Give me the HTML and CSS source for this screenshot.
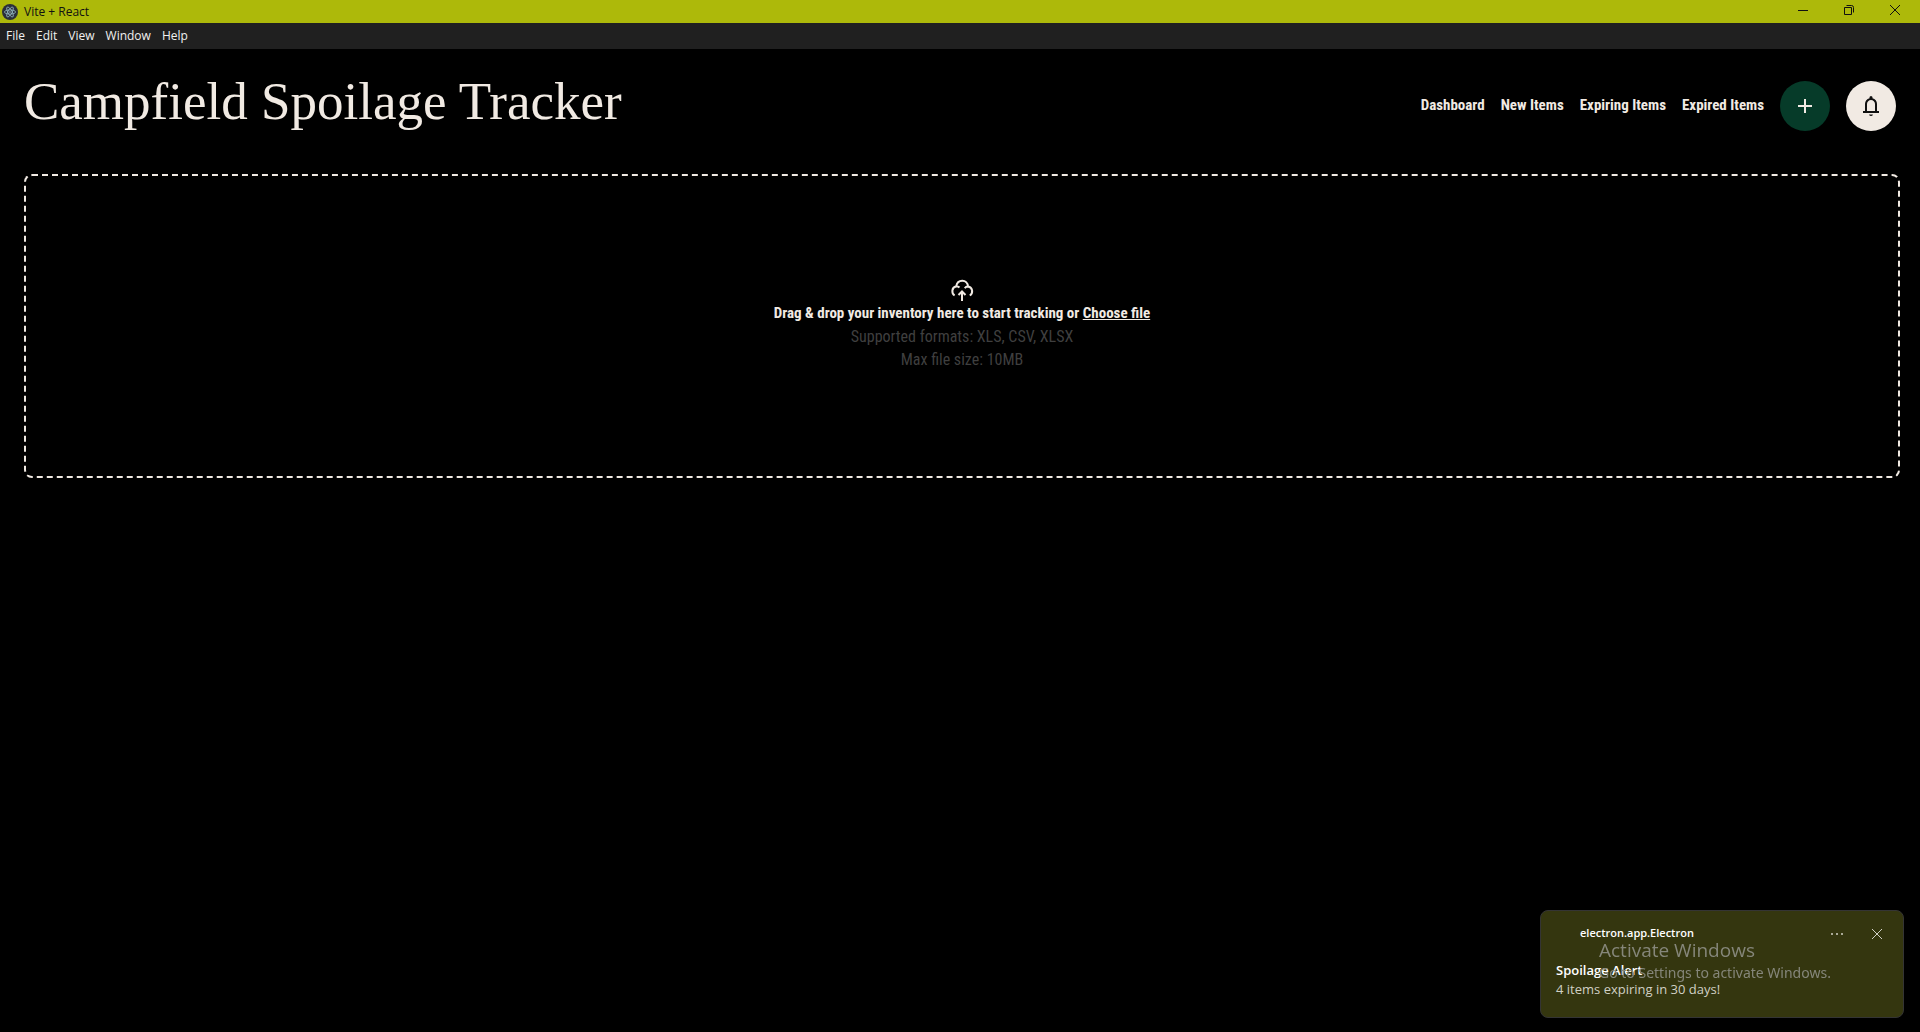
FILE: index.html
```html
<!DOCTYPE html>
<html lang="en">
<head>
<meta charset="utf-8">
<title>Vite + React</title>
<link rel="stylesheet" href="styles.css">
</head>
<body>
<header class="titlebar">
  <svg class="app-icon" viewBox="0 0 16 16"><circle cx="8" cy="8" r="8" fill="#2b2e3a"/><g fill="none" stroke="#9fc5cf" stroke-width=".7"><ellipse cx="8" cy="8" rx="5.6" ry="2.1"/><ellipse cx="8" cy="8" rx="5.6" ry="2.1" transform="rotate(60 8 8)"/><ellipse cx="8" cy="8" rx="5.6" ry="2.1" transform="rotate(120 8 8)"/></g><circle cx="8" cy="8" r=".8" fill="#9fc5cf"/></svg>
  <span class="window-title">Vite + React</span>
  <div class="window-controls">
    <button aria-label="Minimize"><svg viewBox="0 0 10 10"><path d="M0 5.5h10"/></svg></button>
    <button aria-label="Restore"><svg viewBox="0 0 10 10"><path d="M.5 2.5h7v7h-7zM2.5.5h5a2 2 0 0 1 2 2v5"/></svg></button>
    <button aria-label="Close"><svg viewBox="0 0 10 10"><path d="M0 0l10 10M10 0L0 10"/></svg></button>
  </div>
</header>
<div class="menubar">
  <button>File</button><button>Edit</button><button>View</button><button>Window</button><button>Help</button>
</div>
<main class="page">
  <div class="page-header">
    <h1>Campfield Spoilage Tracker</h1>
    <nav class="nav">
      <a href="#dashboard">Dashboard</a>
      <a href="#new">New Items</a>
      <a href="#expiring">Expiring Items</a>
      <a href="#expired">Expired Items</a>
      <button class="round add" aria-label="Add item"><svg viewBox="0 0 24 24"><path fill="currentColor" d="M19 13h-6v6h-2v-6H5v-2h6V5h2v6h6z"/></svg></button>
      <button class="round bell" aria-label="Notifications"><svg viewBox="0 0 24 24"><path fill="currentColor" d="M4 19v-2h2v-7q0-2.075 1.250-3.688T10.500 4.200v-.7q0-.625.438-1.062T12 2t1.063.438T13.500 3.500v.7q2 .5 3.250 2.113T18 10v7h2v2zm6 1.500h4q-.5 1.500-2 1.500t-2-1.500m-2-3.500h8v-7q0-1.650-1.175-2.825T12 6T9.175 7.175T8 10z"/></svg></button>
    </nav>
  </div>
  <section class="dropzone">
    <svg class="cloud" viewBox="0 0 24 24" fill="none" stroke="currentColor" stroke-width="2"><path d="M4.600 17.500C1.500 15.500 1.200 9.500 6.300 8.200C7.500 .8 17.500 1 18 8.500C22.800 9.300 23.500 15 19.800 17.500M6.300 8.200q2 0 3.200 1.300M18 8.500q-2.200 0-3.200 1.700M12 23v-9M8.500 17l3.500-3.500 3.500 3.500"/></svg>
    <p class="prompt">Drag &amp; drop your inventory here to start tracking or <a href="#choose">Choose file</a></p>
    <p class="hint">Supported formats: XLS, CSV, XLSX</p>
    <p class="hint">Max file size: 10MB</p>
  </section>
</main>
<aside class="toast">
  <div class="toast-head">
    <span class="toast-app">electron.app.Electron</span>
    <button aria-label="More options"><svg viewBox="0 0 12 12" fill="currentColor"><circle cx="1" cy="6" r="1"/><circle cx="6" cy="6" r="1"/><circle cx="11" cy="6" r="1"/></svg></button>
    <button aria-label="Dismiss"><svg viewBox="0 0 12 12" fill="none" stroke="currentColor"><path d="M1 1l10 10M11 1L1 11"/></svg></button>
  </div>
  <p class="toast-title">Spoilage Alert</p>
  <p class="toast-text">4 items expiring in 30 days!</p>
</aside>
<div class="watermark">
  <p class="wm-title">Activate Windows</p>
  <p class="wm-text">Go to Settings to activate Windows.</p>
</div>
</body>
</html>
```
FILE: styles.css
```css
* { margin: 0; }
body {
  min-height: 100vh;
  background: #000;
  color: #f1eae3;
  font-family: "Open Sans", "Noto Sans", sans-serif;
}
button {
  padding: 0;
  border: 0;
  background: none;
  color: inherit;
  font: inherit;
}
.titlebar {
  display: flex;
  align-items: center;
  height: 23px;
  padding-left: 2px;
  background: #adb90a;
  color: #111;
  font-size: 12px;
}
.app-icon { width: 16px; height: 16px; }
.window-title { margin-left: 6px; }
.window-controls {
  display: flex;
  align-self: flex-start;
  margin-left: auto;
  padding-right: 2px;
}
.window-controls button {
  display: grid;
  place-items: center;
  width: 46px;
  height: 20px;
}
.window-controls svg {
  width: 10px;
  height: 10px;
  fill: none;
  stroke: #111;
}
.menubar {
  display: flex;
  gap: 11px;
  height: 26px;
  padding-left: 6px;
  background: #202020;
  color: #f0f0f0;
  font-size: 12px;
}
.menubar button { height: 25px; }
.page { padding: 0 24px; }
.page-header {
  display: flex;
  align-items: center;
  justify-content: space-between;
  height: 125px;
}
h1 {
  padding-bottom: 22px;
  font: 400 53px/64px "Liberation Serif", serif;
}
.nav {
  display: flex;
  align-items: center;
  gap: 16px;
  padding-bottom: 12px;
  font: 500 16px/24px "Roboto Condensed", "Roboto", sans-serif;
}
.nav a, .dropzone a { color: inherit; }
.nav a {
  padding-bottom: 2px;
  font-size: 15px;
  font-weight: 700;
  text-decoration: none;
}
.round {
  display: grid;
  place-items: center;
  width: 50px;
  height: 50px;
  border-radius: 50%;
}
.round svg { width: 24px; height: 24px; }
.add { background: #063b29; }
.bell { background: #f1eae3; color: #111; }
.dropzone {
  display: flex;
  flex-direction: column;
  align-items: center;
  justify-content: center;
  width: 100%;
  height: 300px;
  border: 2px dashed #f1eae3;
  border-radius: 8px;
  font: 16px/23px "Roboto Condensed", "Roboto", sans-serif;
}
.cloud { width: 24px; height: 24px; }
.prompt { font-size: 15px; font-weight: 700; }
.hint { color: #3f3f3f; }
.hint:last-child { margin-bottom: 4px; }
.toast {
  position: fixed;
  right: 16px;
  bottom: 14px;
  box-sizing: border-box;
  width: 364px;
  height: 108px;
  padding: 12px 6px 12px 15px;
  border: 1px solid #343434;
  border-radius: 8px;
  background: #34360f;
  color: #fff;
}
.toast-head {
  display: flex;
  align-items: center;
  padding-left: 24px;
  font-size: 11px;
  line-height: 20px;
}
.toast-app { margin-right: auto; font-weight: 600; }
.toast-head button { width: 40px; height: 20px; color: #d0d0c4; }
.toast-head svg { width: 12px; height: 12px; vertical-align: middle; }
.toast-title { margin-top: 18px; font-size: 13px; font-weight: 600; line-height: 19px; }
.toast-text { color: #d0d0c4; font-size: 13px; line-height: 19px; }
.watermark {
  position: fixed;
  right: 86px;
  bottom: 49px;
  width: 235px;
  color: #85867a;
  white-space: nowrap;
}
.wm-title { font-size: 19px; line-height: 26px; }
.wm-text { font-family: "Noto Sans", sans-serif; font-size: 14px; line-height: 20px; }
```
